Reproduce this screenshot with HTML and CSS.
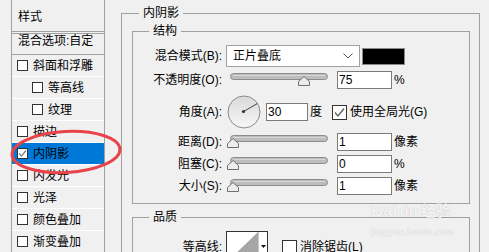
FILE: index.html
```html
<!DOCTYPE html>
<html lang="zh-CN">
<head>
    <meta charset="UTF-8">
    <meta name="viewport" content="width=device-width, initial-scale=1.0">
    <title>图层样式 - 内阴影</title>
    <link rel="stylesheet" href="styles.css">
</head>
<body>
    <div class="page">
        <div class="styles-panel">
            <div class="panel-head">样式</div>
            <div class="panel-blend">混合选项:自定</div>
            <ul class="fx-list">
                <li class="fx"><span class="cb"></span>斜面和浮雕</li>
                <li class="fx sub"><span class="cb"></span>等高线</li>
                <li class="fx sub"><span class="cb"></span>纹理</li>
                <li class="fx"><span class="cb"></span>描边</li>
                <li class="fx active"><span class="cb"><svg width="9" height="9" viewBox="0 0 9 9"><path d="M1 4.5l2.5 2.5 4.5-5.5" fill="none" stroke="#808080" stroke-width="1.2"/></svg></span>内阴影</li>
                <li class="fx"><span class="cb"></span>内发光</li>
                <li class="fx"><span class="cb"></span>光泽</li>
                <li class="fx"><span class="cb"></span>颜色叠加</li>
                <li class="fx"><span class="cb"></span>渐变叠加</li>
            </ul>
        </div>

        <div class="settings">
            <fieldset class="group outer">
                <legend>内阴影</legend>

                <fieldset class="group inner">
                    <legend>结构</legend>
                    <div class="rows">
                        <div class="row row-blend">
                            <span class="lbl">混合模式(B):</span>
                            <div class="select">
                                <span>正片叠底</span>
                                <svg width="10" height="6" viewBox="0 0 10 6"><path d="M.5 .5l4.5 4.5 4.5-4.5" fill="none" stroke="#555"/></svg>
                            </div>
                            <div class="swatch"></div>
                        </div>

                        <div class="row">
                            <span class="lbl">不透明度(O):</span>
                            <svg class="slider" width="106" height="18" viewBox="0 0 106 18">
                                <rect x="4.5" y="2.5" width="97" height="6" rx="3" fill="#bdbdbd" stroke="#8c8c8c"/>
                                <line x1="7" y1="4.5" x2="99" y2="4.5" stroke="#d6d6d6"/>
                                <path d="M72.5 14.5h11v-4l-5.5-5-5.5 5z" fill="#ececec" stroke="#6f6f6f"/>
                            </svg>
                            <span class="num">75</span>
                            <span class="unit">%</span>
                        </div>

                        <div class="row row-angle">
                            <span class="lbl">角度(A):</span>
                            <svg class="dial" width="34" height="34" viewBox="0 0 34 34">
                                <defs>
                                    <linearGradient id="dialFill" x1="0" y1="0" x2="0" y2="1">
                                        <stop offset="0" stop-color="#d9d9d9"/>
                                        <stop offset="1" stop-color="#f7f7f7"/>
                                    </linearGradient>
                                </defs>
                                <circle cx="17" cy="17" r="16" fill="url(#dialFill)" stroke="#8a8a8a"/>
                                <line x1="16.5" y1="16.5" x2="30.5" y2="8.5" stroke="#444"/>
                                <circle cx="16.5" cy="16.5" r="1.6" fill="#333"/>
                            </svg>
                            <span class="num num-short">30</span>
                            <span class="unit">度</span>
                            <span class="check"><svg width="13" height="13" viewBox="0 0 13 13"><path d="M2 6.5l3 3.5 6-7.5" fill="none" stroke="#606060" stroke-width="1.3"/></svg></span>
                            <span class="check-text">使用全局光(G)</span>
                        </div>

                        <div class="row">
                            <span class="lbl">距离(D):</span>
                            <svg class="slider" width="106" height="18" viewBox="0 0 106 18">
                                <rect x="4.5" y="2.5" width="97" height="6" rx="3" fill="#bdbdbd" stroke="#8c8c8c"/>
                                <line x1="7" y1="4.5" x2="99" y2="4.5" stroke="#d6d6d6"/>
                                <path d="M1.5 14.5h11v-4l-5.5-5-5.5 5z" fill="#ececec" stroke="#6f6f6f"/>
                            </svg>
                            <span class="num">1</span>
                            <span class="unit">像素</span>
                        </div>

                        <div class="row">
                            <span class="lbl">阻塞(C):</span>
                            <svg class="slider" width="106" height="18" viewBox="0 0 106 18">
                                <rect x="4.5" y="2.5" width="97" height="6" rx="3" fill="#bdbdbd" stroke="#8c8c8c"/>
                                <line x1="7" y1="4.5" x2="99" y2="4.5" stroke="#d6d6d6"/>
                                <path d="M1.5 14.5h11v-4l-5.5-5-5.5 5z" fill="#ececec" stroke="#6f6f6f"/>
                            </svg>
                            <span class="num">0</span>
                            <span class="unit">%</span>
                        </div>

                        <div class="row">
                            <span class="lbl">大小(S):</span>
                            <svg class="slider" width="106" height="18" viewBox="0 0 106 18">
                                <rect x="4.5" y="2.5" width="97" height="6" rx="3" fill="#bdbdbd" stroke="#8c8c8c"/>
                                <line x1="7" y1="4.5" x2="99" y2="4.5" stroke="#d6d6d6"/>
                                <path d="M1.5 14.5h11v-4l-5.5-5-5.5 5z" fill="#ececec" stroke="#6f6f6f"/>
                            </svg>
                            <span class="num">1</span>
                            <span class="unit">像素</span>
                        </div>
                    </div>
                </fieldset>

                <fieldset class="group inner quality">
                    <legend>品质</legend>
                    <div class="rows">
                        <div class="row row-contour">
                            <span class="lbl">等高线:</span>
                            <svg class="contour" width="42" height="32" viewBox="0 0 42 32">
                                <rect x=".5" y=".5" width="41" height="31" fill="#fff" stroke="#333"/>
                                <path d="M1 31L32 1V31z" fill="#a6a6a6"/>
                                <line x1="32.5" y1="1" x2="32.5" y2="31" stroke="#c8c8c8"/>
                                <path d="M35 14h5l-2.5 3z" fill="#111"/>
                            </svg>
                            <span class="check check-gap"></span>
                            <span class="check-text">消除锯齿(L)</span>
                        </div>
                    </div>
                </fieldset>
            </fieldset>
        </div>

        <svg class="mark" width="130" height="60" viewBox="0 0 130 60">
            <ellipse cx="66" cy="30" rx="54" ry="20.5" transform="rotate(-3 66 30)" fill="none" stroke="#e8434a" stroke-width="3"/>
        </svg>

        <div class="watermark">
            <div class="wm-logo">Bai<span class="wm-du">du</span><span class="wm-cn">经验</span></div>
            <div class="wm-url">jingyan.baidu.com</div>
        </div>
    </div>
</body>
</html>
```

FILE: styles.css
```css
html, body {
    margin: 0;
    padding: 0;
}

body {
    width: 489px;
    height: 252px;
    overflow: hidden;
    background-color: #f0f0f0;
    color: #000;
    font-family: "Liberation Sans", "Noto Sans CJK SC", sans-serif;
    font-size: 12px;
    line-height: 16px;
}

.page {
    position: relative;
    display: flex;
    height: 100%;
}

/* left list of effects */
.styles-panel {
    flex: none;
    width: 92px;
    margin-left: 11px;
    border-left: 1px solid #a0a0a0;
    border-right: 1px solid #a0a0a0;
}

.panel-head {
    padding: 9px 0 6px 6px;
    border-bottom: 3px double #a0a0a0;
}

.panel-blend {
    height: 20px;
    padding-left: 6px;
    line-height: 14px;
    border-bottom: 1px solid #a0a0a0;
}

.fx-list {
    list-style: none;
    margin: 0;
    padding: 0;
}

.fx {
    display: flex;
    align-items: center;
    height: 21px;
    padding-left: 5px;
    border-bottom: 1px solid #fff;
}

.fx.sub {
    padding-left: 20px;
}

.fx.active {
    background-color: #0078d7;
}

.cb {
    flex: none;
    display: flex;
    align-items: center;
    justify-content: center;
    width: 11px;
    height: 11px;
    margin-right: 5px;
    border: 1px solid #333;
    background-color: #fff;
    box-sizing: border-box;
}

/* right settings */
.settings {
    flex: none;
    width: 359px;
    margin-left: 16px;
    padding-top: 5px;
}

fieldset.group {
    margin: 0;
    min-width: 0;
    border: 1px solid #a0a0a0;
}

fieldset.group legend {
    padding: 0 4px;
    line-height: 16px;
}

.outer {
    padding: 0 9px 60px 10px;
}

.outer > legend {
    margin-left: 7px;
}

.inner {
    margin-top: 2px !important;
    padding: 6px 0 8px 0;
}

.inner > legend {
    margin-left: 16px;
}

.quality {
    margin-top: 5px !important;
    padding-bottom: 30px;
}

.rows {
    display: flex;
    flex-direction: column;
    gap: 4px;
}

.row {
    display: flex;
    align-items: center;
    height: 18px;
}

.row-blend {
    height: 22px;
}

.row-angle {
    height: 34px;
    margin-top: 2px;
}

.row-contour {
    height: 32px;
}

.lbl {
    flex: none;
    width: 89px;
    margin-right: 4px;
    text-align: right;
    white-space: nowrap;
}

.select {
    flex: none;
    display: flex;
    align-items: center;
    justify-content: space-between;
    width: 134px;
    height: 22px;
    padding: 0 6px;
    box-sizing: border-box;
    border: 1px solid #a0a0a0;
    background-color: #fff;
}

.swatch {
    flex: none;
    width: 43px;
    height: 17px;
    margin-left: 2px;
    box-sizing: border-box;
    border: 1px solid #8a8a8a;
    background-color: #000;
}

.slider {
    flex: none;
    display: block;
}

.num {
    flex: none;
    width: 55px;
    height: 18px;
    margin-left: 5px;
    padding-left: 1px;
    box-sizing: border-box;
    border: 1px solid #7a7a7a;
    background-color: #fff;
}

.num-short {
    width: 42px;
}

.unit {
    margin-left: 2px;
}

.dial {
    flex: none;
    display: block;
    margin-left: 1px;
}

.check {
    flex: none;
    display: flex;
    align-items: center;
    justify-content: center;
    width: 15px;
    height: 15px;
    margin-left: 10px;
    box-sizing: border-box;
    border: 1px solid #333;
    background-color: #fff;
}

.check-gap {
    margin-left: 14px;
}

.check-text {
    margin-left: 3px;
    white-space: nowrap;
}

.contour {
    flex: none;
    display: block;
}

/* annotation and watermark over the dialog */
.mark {
    position: absolute;
    left: 0;
    top: 122px;
}

.watermark {
    position: absolute;
    left: 371px;
    top: 198px;
    color: rgba(255, 255, 255, 0.85);
    text-shadow: 0 0 1px rgba(0, 0, 0, 0.25);
}

.wm-logo {
    font-family: "Liberation Sans", "Noto Sans CJK SC", sans-serif;
    font-size: 17px;
    font-weight: bold;
    line-height: 26px;
    white-space: nowrap;
}

.wm-du {
    margin-left: 2px;
    font-size: 15px;
}

.wm-cn {
    margin-left: 3px;
    font-size: 15px;
}

.wm-url {
    margin-top: 2px;
    font-family: "Liberation Serif", serif;
    font-size: 10px;
    line-height: 12px;
    letter-spacing: 0.5px;
}
```
